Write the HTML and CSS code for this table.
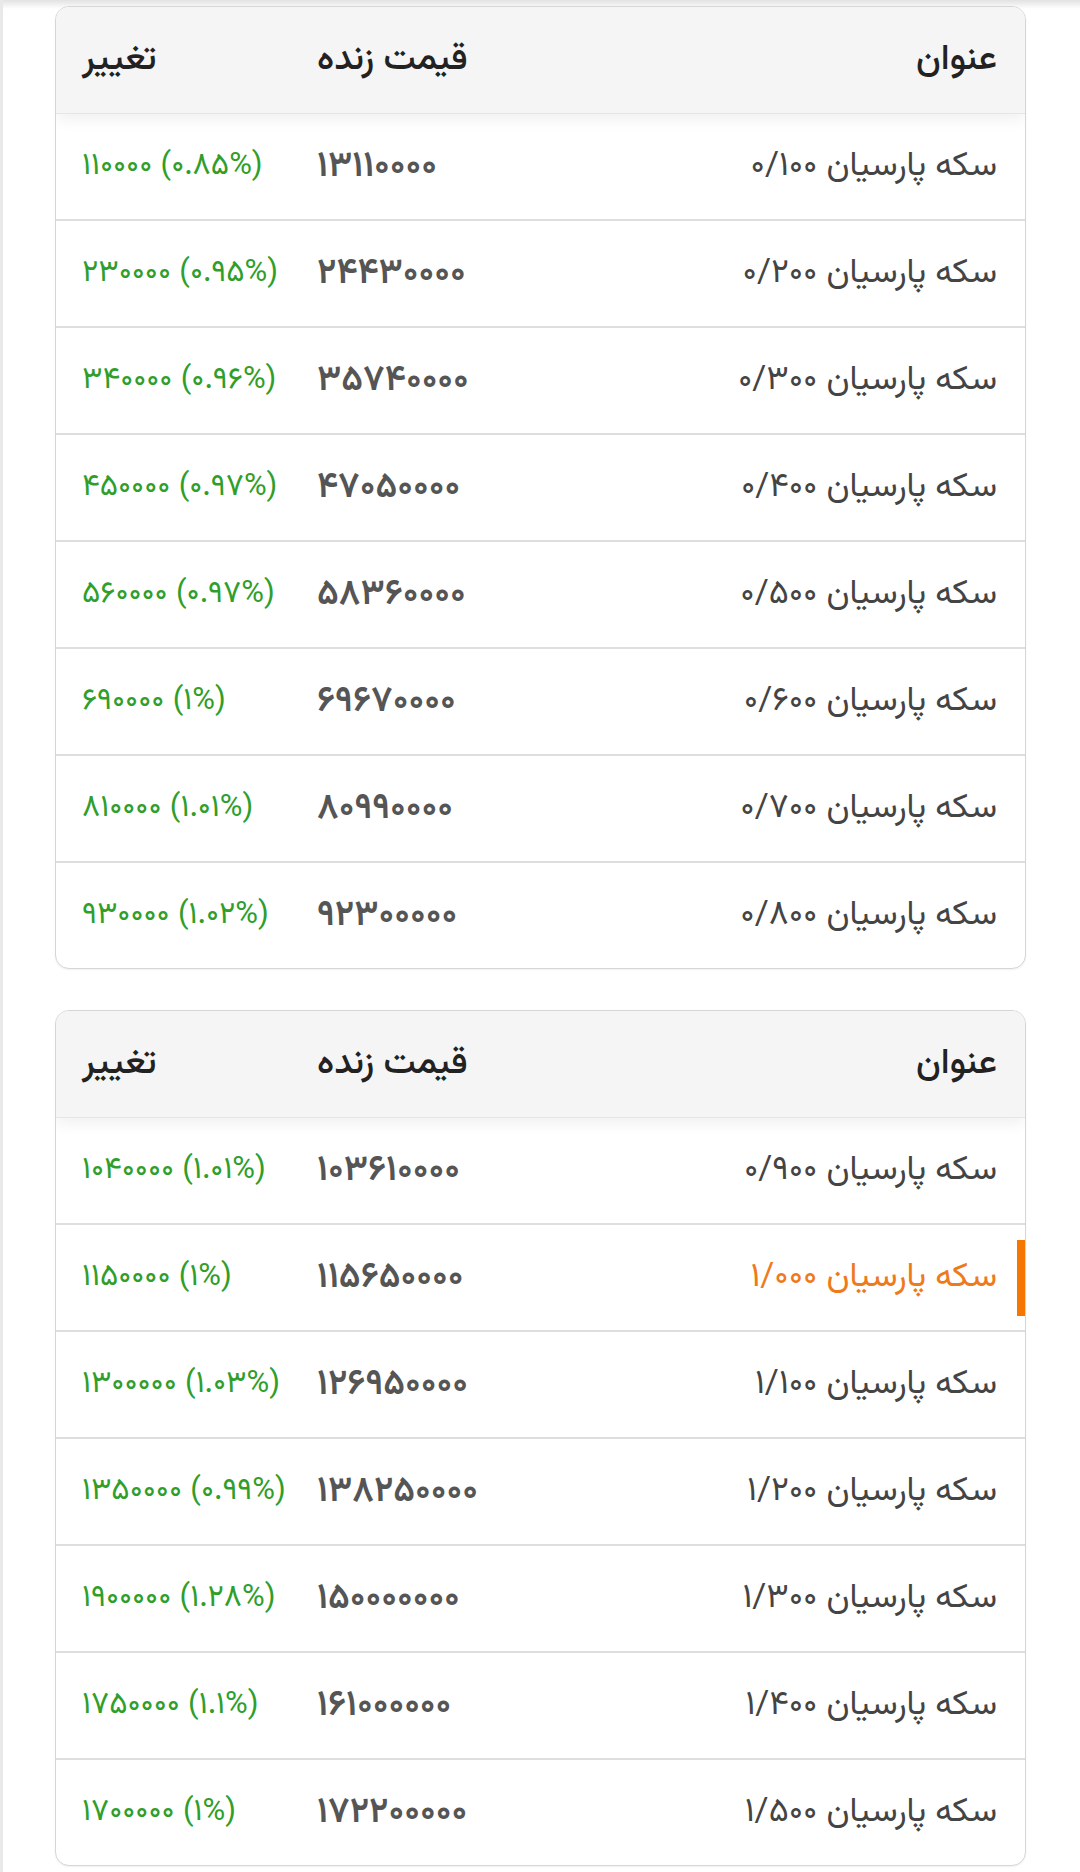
FILE: index.html
```html
<!DOCTYPE html>
<html lang="fa" dir="rtl">
<head>
<meta charset="utf-8">
<title>قیمت سکه پارسیان</title>
<link rel="stylesheet" href="styles.css">
</head>
<body>
<main class="page">
  <section class="card">
    <div class="row head">
      <div class="cell title">عنوان</div>
      <div class="cell num">قیمت زنده</div>
      <div class="cell chg">تغییر</div>
    </div>
    <div class="row"><div class="cell title">سکه پارسیان ۰/۱۰۰</div><div class="cell num price">۱۳۱۱۰۰۰۰</div><div class="cell chg up">۱۱۰۰۰۰ (۰.۸۵%)</div></div>
    <div class="row"><div class="cell title">سکه پارسیان ۰/۲۰۰</div><div class="cell num price">۲۴۴۳۰۰۰۰</div><div class="cell chg up">۲۳۰۰۰۰ (۰.۹۵%)</div></div>
    <div class="row"><div class="cell title">سکه پارسیان ۰/۳۰۰</div><div class="cell num price">۳۵۷۴۰۰۰۰</div><div class="cell chg up">۳۴۰۰۰۰ (۰.۹۶%)</div></div>
    <div class="row"><div class="cell title">سکه پارسیان ۰/۴۰۰</div><div class="cell num price">۴۷۰۵۰۰۰۰</div><div class="cell chg up">۴۵۰۰۰۰ (۰.۹۷%)</div></div>
    <div class="row"><div class="cell title">سکه پارسیان ۰/۵۰۰</div><div class="cell num price">۵۸۳۶۰۰۰۰</div><div class="cell chg up">۵۶۰۰۰۰ (۰.۹۷%)</div></div>
    <div class="row"><div class="cell title">سکه پارسیان ۰/۶۰۰</div><div class="cell num price">۶۹۶۷۰۰۰۰</div><div class="cell chg up">۶۹۰۰۰۰ (۱%)</div></div>
    <div class="row"><div class="cell title">سکه پارسیان ۰/۷۰۰</div><div class="cell num price">۸۰۹۹۰۰۰۰</div><div class="cell chg up">۸۱۰۰۰۰ (۱.۰۱%)</div></div>
    <div class="row"><div class="cell title">سکه پارسیان ۰/۸۰۰</div><div class="cell num price">۹۲۳۰۰۰۰۰</div><div class="cell chg up">۹۳۰۰۰۰ (۱.۰۲%)</div></div>
  </section>

  <section class="card">
    <div class="row head">
      <div class="cell title">عنوان</div>
      <div class="cell num">قیمت زنده</div>
      <div class="cell chg">تغییر</div>
    </div>
    <div class="row"><div class="cell title">سکه پارسیان ۰/۹۰۰</div><div class="cell num price">۱۰۳۶۱۰۰۰۰</div><div class="cell chg up">۱۰۴۰۰۰۰ (۱.۰۱%)</div></div>
    <div class="row active"><div class="cell title">سکه پارسیان ۱/۰۰۰</div><div class="cell num price">۱۱۵۶۵۰۰۰۰</div><div class="cell chg up">۱۱۵۰۰۰۰ (۱%)</div></div>
    <div class="row"><div class="cell title">سکه پارسیان ۱/۱۰۰</div><div class="cell num price">۱۲۶۹۵۰۰۰۰</div><div class="cell chg up">۱۳۰۰۰۰۰ (۱.۰۳%)</div></div>
    <div class="row"><div class="cell title">سکه پارسیان ۱/۲۰۰</div><div class="cell num price">۱۳۸۲۵۰۰۰۰</div><div class="cell chg up">۱۳۵۰۰۰۰ (۰.۹۹%)</div></div>
    <div class="row"><div class="cell title">سکه پارسیان ۱/۳۰۰</div><div class="cell num price">۱۵۰۰۰۰۰۰۰</div><div class="cell chg up">۱۹۰۰۰۰۰ (۱.۲۸%)</div></div>
    <div class="row"><div class="cell title">سکه پارسیان ۱/۴۰۰</div><div class="cell num price">۱۶۱۰۰۰۰۰۰</div><div class="cell chg up">۱۷۵۰۰۰۰ (۱.۱%)</div></div>
    <div class="row"><div class="cell title">سکه پارسیان ۱/۵۰۰</div><div class="cell num price">۱۷۲۲۰۰۰۰۰</div><div class="cell chg up">۱۷۰۰۰۰۰ (۱%)</div></div>
  </section>
</main>
</body>
</html>
```

FILE: styles.css
```css
html, body {
  margin: 0;
  padding: 0;
}
body {
  width: 1080px;
  height: 1872px;
  overflow: hidden;
  background:
    linear-gradient(to right, #e9e9e9 3px, transparent 3px),
    linear-gradient(#e2e2e2 0, #ffffff 9px) #ffffff;
  font-family: "Vazirmatn", "Vazir", "Noto Sans Arabic", "Noto Naskh Arabic", "DejaVu Sans", sans-serif;
  color: #444;
}
.page {
  padding: 6px 54px 0 55px;
  display: flex;
  flex-direction: column;
  gap: 41px;
}
.card {
  background: #fff;
  border: 1px solid #d6d6d6;
  border-radius: 14px;
  overflow: hidden;
  box-shadow: 0 1px 2px rgba(0,0,0,0.06);
}
.row {
  position: relative;
  display: grid;
  grid-template-columns: 1fr 250px 235px;
  height: 105px;
  align-items: center;
  border-top: 2px solid #dedede;
}
.row.head {
  height: 106px;
  border-top: 0;
  background: #f5f5f5;
  border-bottom: 1px solid #e6e6e6;
  box-shadow: 0 6px 14px rgba(0,0,0,0.06);
  z-index: 1;
  color: #222;
  font-weight: 500;
}
.row.head + .row {
  border-top: 0;
}
.cell {
  font-size: 34px;
  white-space: nowrap;
}
.row.head .cell {
  font-size: 36px;
}
.title {
  padding-right: 28px;
  text-align: right;
}
.num {
  padding-left: 26px;
  text-align: left;
}
.chg {
  padding-left: 26px;
  text-align: left;
}
.price, .up {
  direction: ltr;
}
.price {
  color: #555;
  font-weight: 600;
  font-size: 36px;
  letter-spacing: 3px;
}
.up {
  color: #2f9e2a;
  font-size: 31px;
}
.row.active .title {
  color: #ee7a1c;
}
.row.active::after {
  content: "";
  position: absolute;
  right: 0;
  top: 15px;
  bottom: 14px;
  width: 8px;
  background: #f57600;
}
```
